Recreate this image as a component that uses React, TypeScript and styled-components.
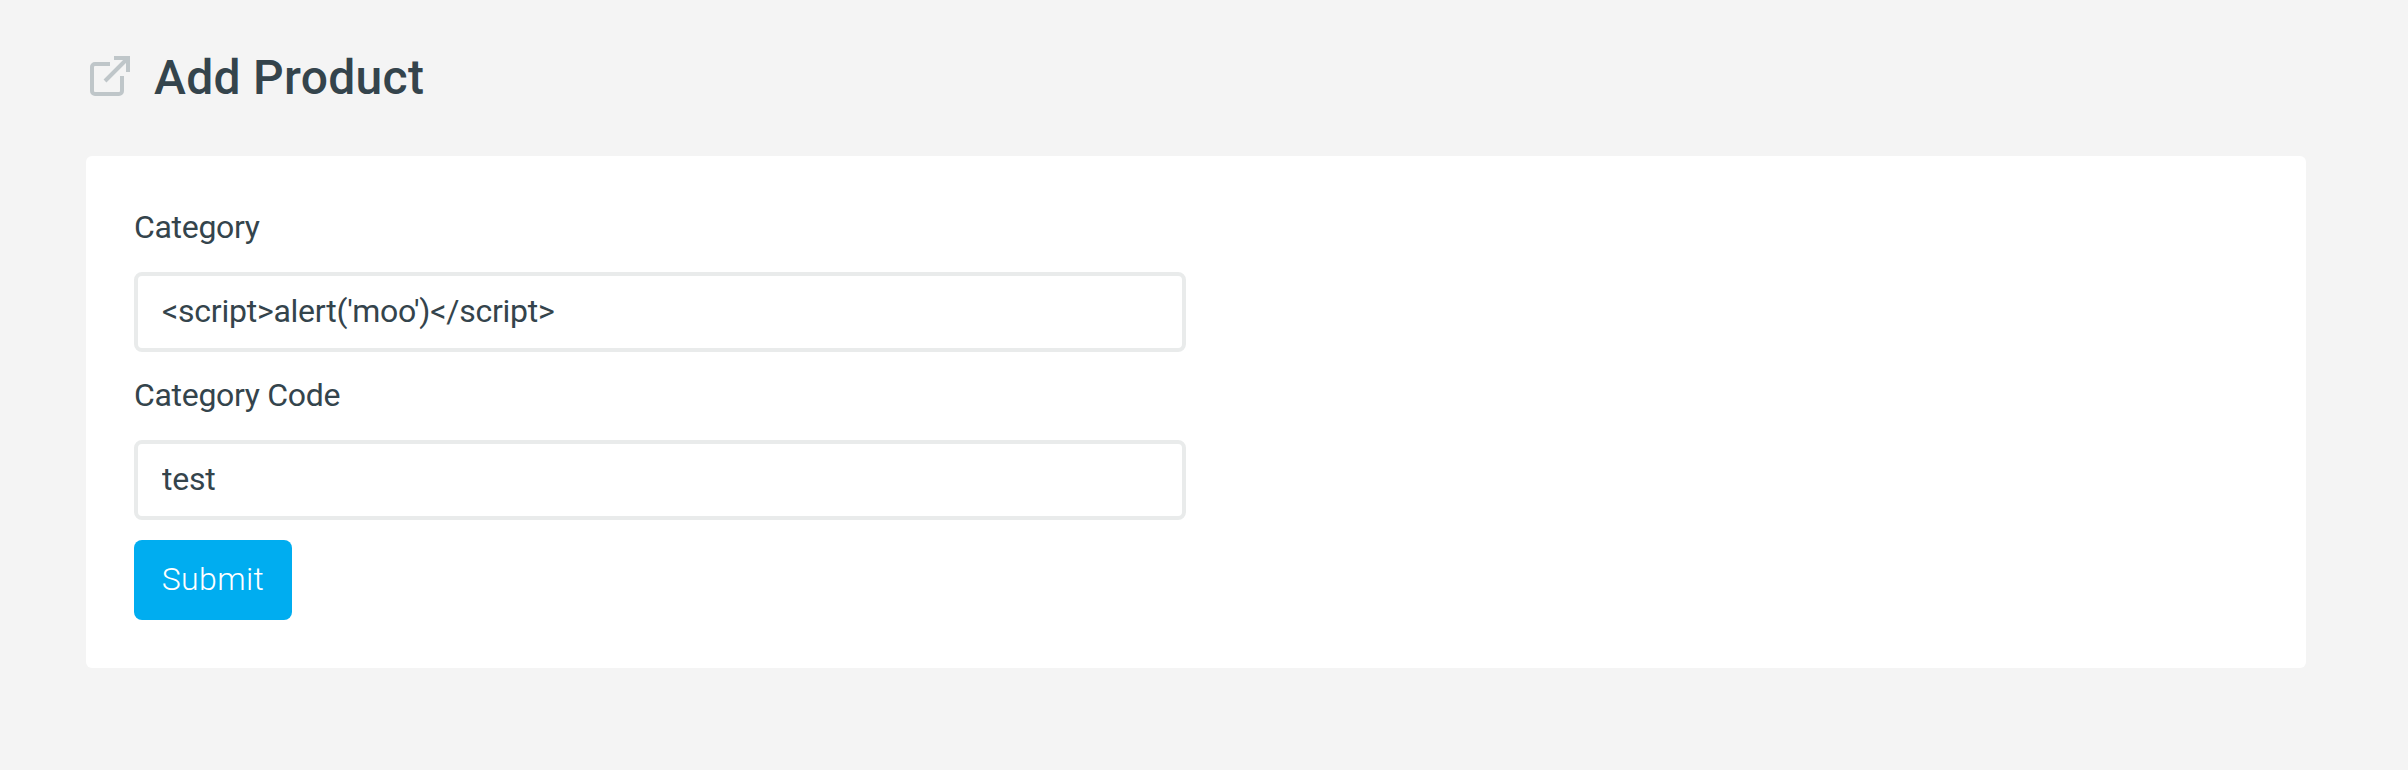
import React from "react";
import styled, { createGlobalStyle } from "styled-components";

const Global = createGlobalStyle`
  * { box-sizing: border-box; }
  body { margin: 0; background: #f4f4f4; font-family: Roboto, "Liberation Sans", sans-serif; color: #34444c; }
`;
const Page = styled.main`
  min-height: 770px;
  padding: 50px 102px 0 86px;
`;
const Header = styled.header`
  display: flex;
  align-items: center;
  height: 52px;
  gap: 24px;
  padding-left: 4px;
`;
const Icon = styled.svg`
  width: 40px;
  height: 40px;
  fill: none;
  stroke: #bfc6c9;
  stroke-width: 4;
`;
const Title = styled.h1`
  margin: 0;
  padding-top: 3px;
  font-size: 48px;
  font-weight: 500;
  line-height: 52px;
  letter-spacing: 0.3px;
`;
const Card = styled.section`
  margin-top: 54px;
  padding: 48px;
  background: #fff;
  border-radius: 6px;
`;
const Form = styled.form`
  width: 1052px;
  display: flex;
  flex-direction: column;
  align-items: flex-start;
`;
const Label = styled.label`
  font-size: 32px;
  line-height: 46px;
  letter-spacing: -0.32px;
  margin-bottom: 22px;
`;
const Input = styled.input`
  width: 100%;
  height: 80px;
  margin-bottom: 20px;
  padding: 0 24px 2px;
  border: 4px solid #e9ebeb;
  border-radius: 8px;
  font: 32px Roboto, "Liberation Sans", sans-serif;
  letter-spacing: -0.24px;
  color: inherit;
  outline: none;
`;
const Submit = styled.button`
  height: 80px;
  width: 158px;
  padding: 0 0 2px;
  border: 0;
  border-radius: 8px;
  background: #00adf0;
  color: #fff;
  font: 350 32px Roboto, "Liberation Sans", sans-serif;
  letter-spacing: 0.4px;
`;

export default function App() {
  return (
    <Page>
      <Global />
      <Header>
        <Icon viewBox="0 0 40 40" aria-hidden="true">
          <path d="M20 8H5a3 3 0 0 0-3 3v24a3 3 0 0 0 3 3h24a3 3 0 0 0 3-3V20M15 25L37 3M24 2h14v14" />
        </Icon>
        <Title>Add Product</Title>
      </Header>
      <Card>
        <Form onSubmit={(e) => e.preventDefault()}>
          <Label htmlFor="category">Category</Label>
          <Input id="category" defaultValue="<script>alert('moo')</script>" />
          <Label htmlFor="code">Category Code</Label>
          <Input id="code" defaultValue="test" />
          <Submit type="submit">Submit</Submit>
        </Form>
      </Card>
    </Page>
  );
}
